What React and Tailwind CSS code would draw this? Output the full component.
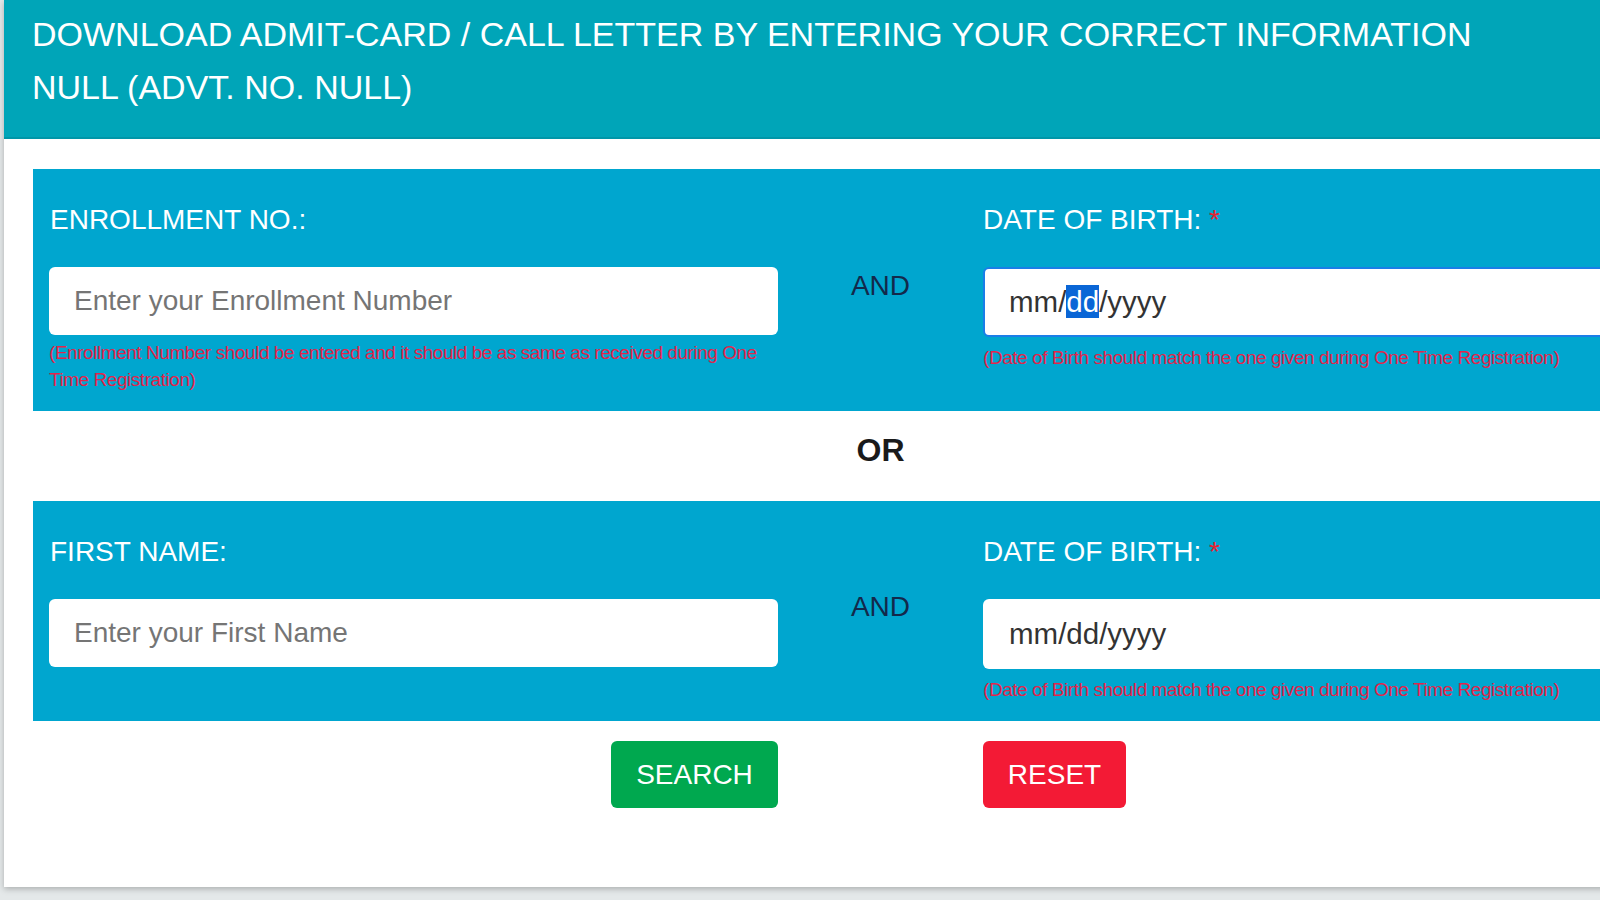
import React from "react";

const font = { fontFamily: '"Liberation Sans", Arial, sans-serif' };

function Panel({ label, placeholder, hint, andTop, focused }) {
  return (
    <div className="bg-[#00a6cf] pl-[16px] pt-[33px] pb-[18px] grid grid-cols-[729px_205px_729px]">
      <div>
        <div className="text-white text-[28px] leading-[36px] h-[36px] pl-[1px]">{label}</div>
        <div className="mt-[29px] h-[68px] bg-white rounded-[6px] flex items-center pl-[25px] text-[28px] text-[#757575]">
          {placeholder}
        </div>
        {hint ? (
          <div className="mt-[4px] text-[19px] leading-[27px] tracking-[-0.45px] text-[#e3244a] pr-[16px]">
            {hint}
          </div>
        ) : null}
      </div>
      <div className={`text-center text-[28px] leading-[32px] text-[#13294b] ${andTop}`}>AND</div>
      <div>
        <div className="text-white text-[28px] leading-[36px] h-[36px]">
          DATE OF BIRTH: <span className="text-[#e8202e]">*</span>
        </div>
        <div
          className={`mt-[29px] h-[70px] bg-white rounded-[6px] flex items-center text-[29.5px] text-[#333] ${
            focused ? "border-2 border-[#1a7ee8] pl-[24px]" : "pl-[26px]"
          }`}
        >
          {focused ? (
            <span>
              mm/<span className="bg-[#0a66d6] text-white">dd</span>/yyyy
            </span>
          ) : (
            <span>mm/dd/yyyy</span>
          )}
        </div>
        <div className="mt-[7px] text-[19px] leading-[27px] tracking-[-0.45px] text-[#e3244a]">
          (Date of Birth should match the one given during One Time Registration)
        </div>
      </div>
    </div>
  );
}

export default function App() {
  return (
    <div style={font} className="w-full h-[900px] overflow-hidden bg-[#e4e8e9]">
      <div className="ml-[4px] w-[1740px] h-[887px] bg-white shadow-[0_2px_6px_rgba(0,0,0,0.25)]">
        <div className="bg-[#00a5b8] border-b-2 border-[#0096a8] h-[139px] pl-[28px] pt-[8px] text-white text-[34px] leading-[53px]">
          <div>DOWNLOAD ADMIT-CARD / CALL LETTER BY ENTERING YOUR CORRECT INFORMATION</div>
          <div>NULL (ADVT. NO. NULL)</div>
        </div>
        <div className="pl-[29px] pt-[30px]">
          <Panel
            label="ENROLLMENT NO.:"
            placeholder="Enter your Enrollment Number"
            hint="(Enrollment Number should be entered and it should be as same as received during One Time Registration)"
            andTop="pt-[68px]"
            focused
          />
          <div className="h-[90px] pl-[16px] pt-[21px] grid grid-cols-[729px_205px_729px]">
            <div />
            <div className="text-center font-bold text-[32px] leading-[36px] text-[#1a1a1a]">OR</div>
            <div />
          </div>
          <Panel
            label="FIRST NAME:"
            placeholder="Enter your First Name"
            andTop="pt-[57px]"
          />
          <div className="pl-[16px] pt-[20px] grid grid-cols-[729px_205px_729px]">
            <div className="flex justify-end">
              <button className="h-[67px] w-[167px] bg-[#00a84f] rounded-[6px] text-white text-[28px]">
                SEARCH
              </button>
            </div>
            <div />
            <div>
              <button className="h-[67px] w-[143px] bg-[#f31a35] rounded-[6px] text-white text-[28px]">
                RESET
              </button>
            </div>
          </div>
        </div>
      </div>
    </div>
  );
}
